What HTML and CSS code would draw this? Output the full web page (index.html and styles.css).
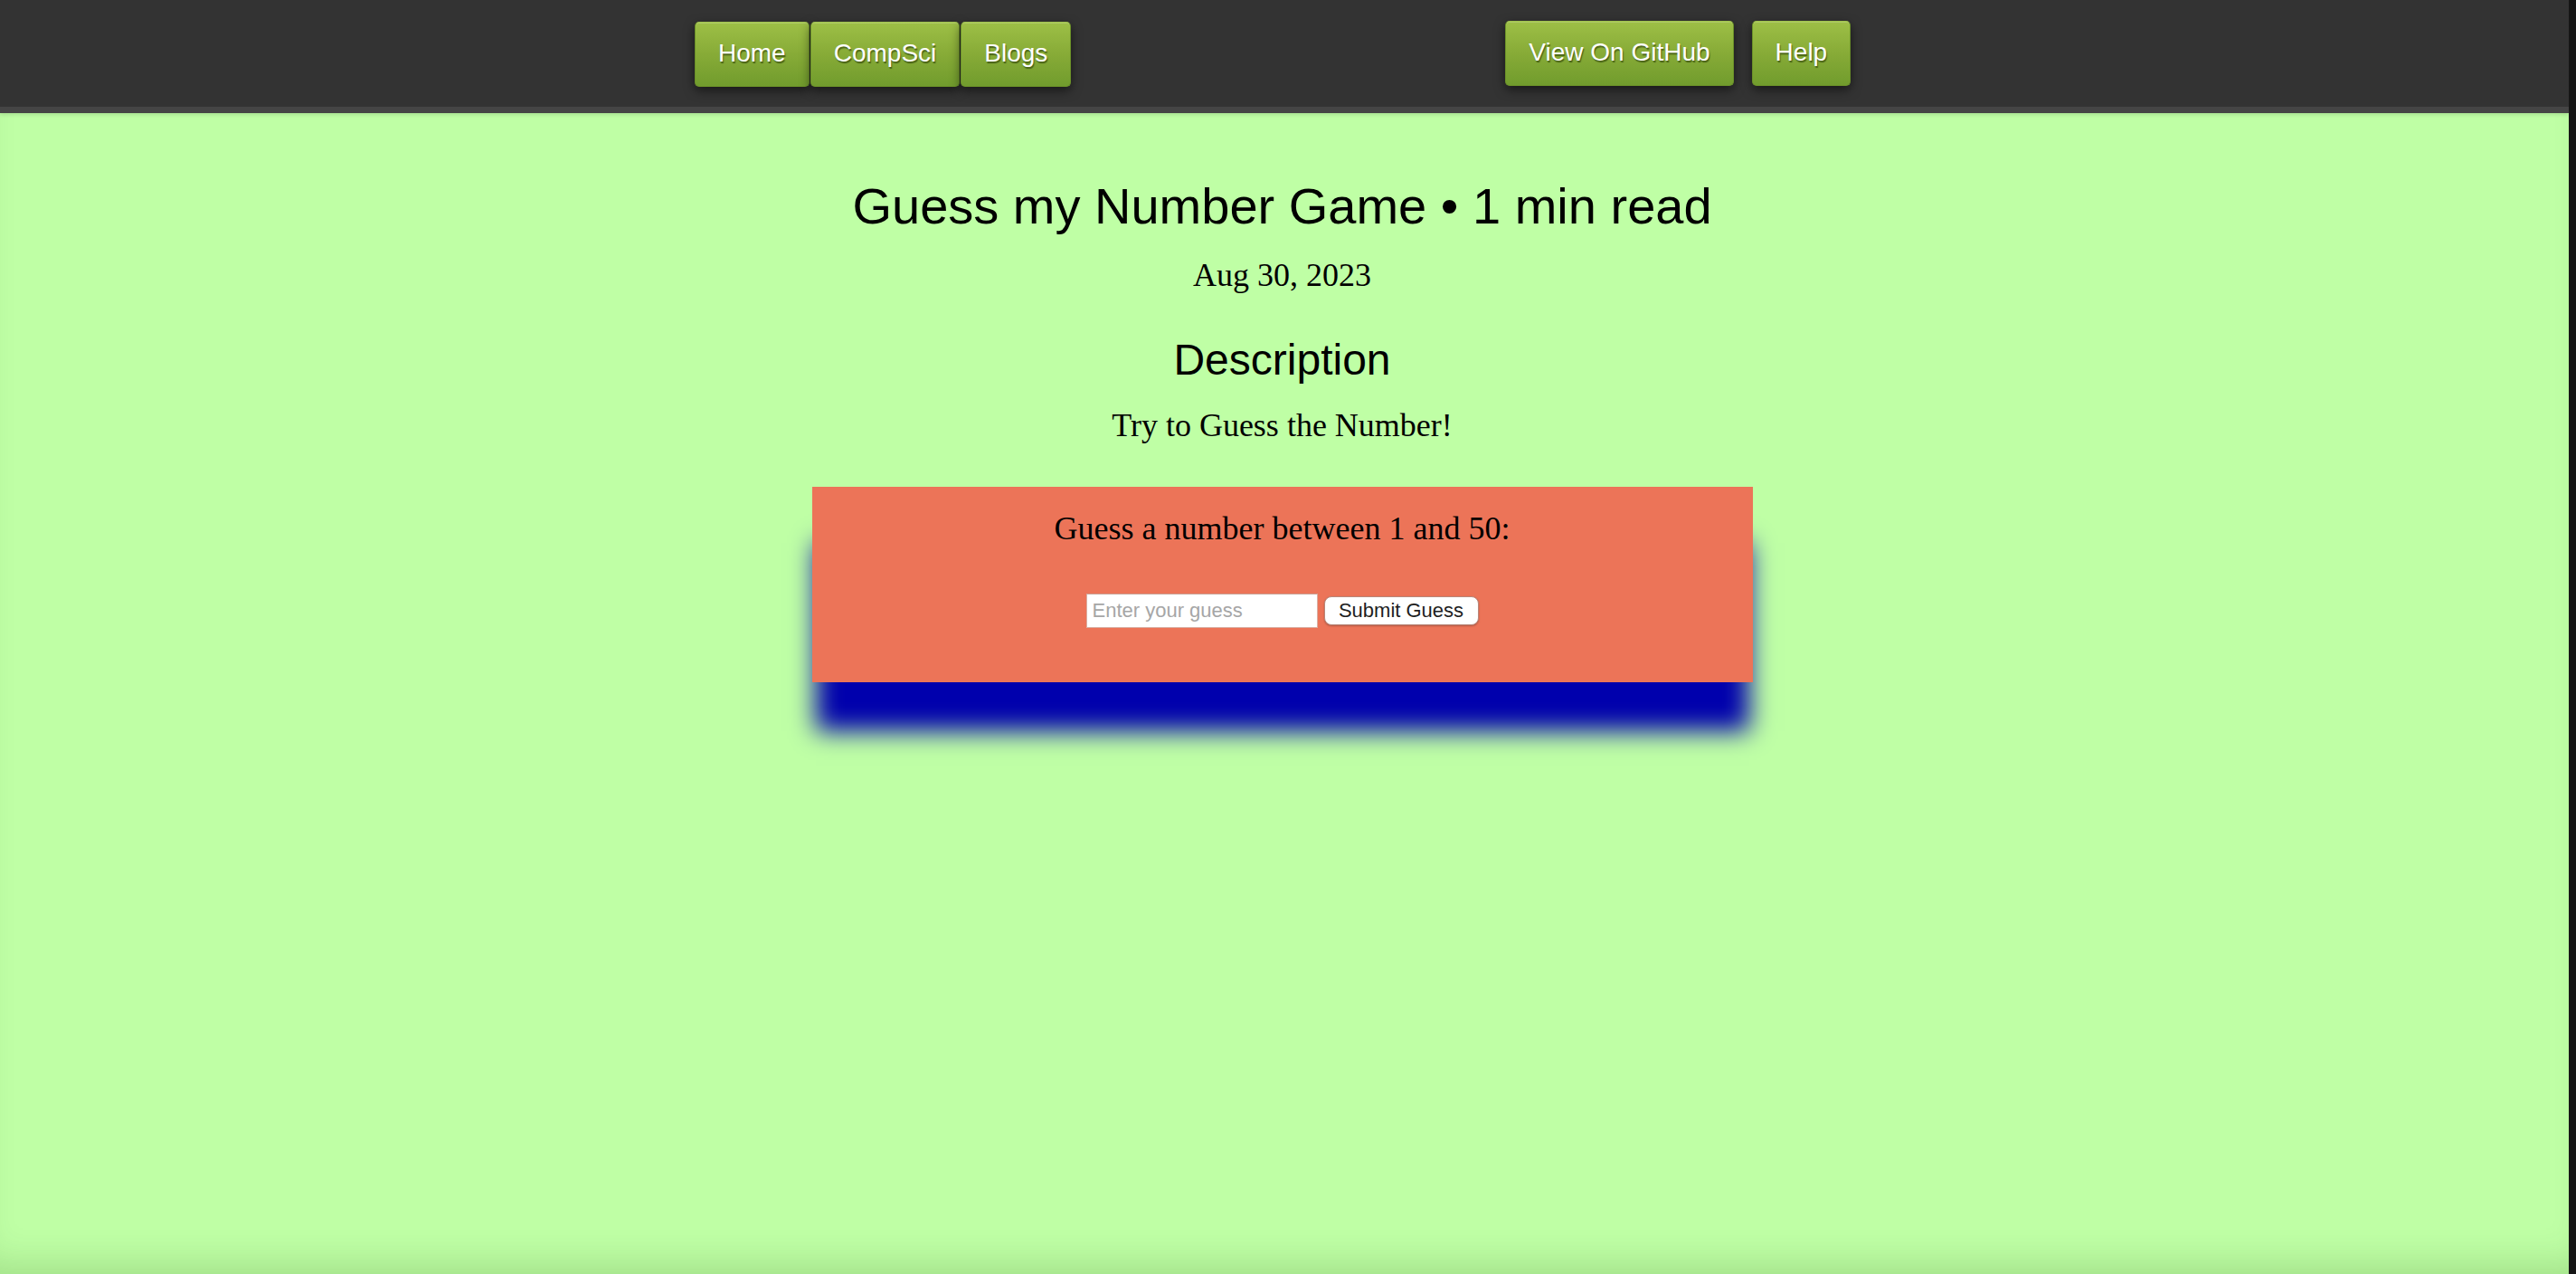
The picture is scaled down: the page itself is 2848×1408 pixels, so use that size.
FILE: index.html
```html
<!DOCTYPE html>
<html lang="en">
<head>
<meta charset="utf-8">
<title>Guess my Number Game</title>
<link rel="stylesheet" href="styles.css">
</head>
<body>
<header class="topbar">
  <nav class="nav">
    <div class="nav-group">
      <a class="nav-btn" href="#">Home</a>
      <a class="nav-btn" href="#">CompSci</a>
      <a class="nav-btn" href="#">Blogs</a>
    </div>
    <div class="nav-group nav-group-right">
      <a class="nav-btn" href="#">View On GitHub</a>
      <a class="nav-btn" href="#">Help</a>
    </div>
  </nav>
</header>
<main class="post">
  <h1 class="post-title">Guess my Number Game • 1 min read</h1>
  <p class="post-date">Aug 30, 2023</p>
  <h2 class="post-heading">Description</h2>
  <p class="post-lead">Try to Guess the Number!</p>
  <section class="game">
    <p class="game-prompt">Guess a number between 1 and 50:</p>
    <div class="game-form">
      <input class="game-input" type="text" placeholder="Enter your guess">
      <button class="game-submit" type="button">Submit Guess</button>
    </div>
  </section>
</main>
</body>
</html>
```
FILE: styles.css
```css
html {
  background: #161616;
}
body {
  margin: 0 8px 0 0;
  min-height: 1408px;
  background: #bfffa5;
  box-shadow: inset 0 -34px 40px -24px rgba(20, 70, 0, 0.18);
  font-family: "Liberation Serif", "Times New Roman", serif;
  color: #000;
}
.topbar {
  height: 118px;
  background: #333333;
  border-bottom: 7px solid #454545;
  box-shadow: 0 2px 4px rgba(0, 0, 0, 0.12);
}
.nav {
  display: flex;
  align-items: flex-start;
  padding-left: 768px;
  padding-top: 24px;
}
.nav-group {
  display: flex;
  gap: 1px;
}
.nav-group-right {
  margin-left: 480px;
  margin-top: -1px;
  gap: 20px;
}
.nav-btn {
  display: flex;
  align-items: center;
  box-sizing: border-box;
  height: 72px;
  padding: 0 25px 2px;
  border: 1px solid #6b9128;
  border-top-color: #9fc24a;
  border-radius: 5px;
  background: linear-gradient(#9dbf46, #87ab37 50%, #719c2d);
  box-shadow: 0 4px 12px rgba(0, 0, 0, 0.55), inset 0 1px 0 rgba(255, 255, 255, 0.18);
  color: #fff;
  text-decoration: none;
  font-family: "Liberation Sans", Arial, sans-serif;
  font-size: 28px;
  text-shadow: 1px 2px 1px rgba(50, 70, 10, 0.7);
}
.post {
  display: flex;
  flex-direction: column;
  align-items: center;
  padding-top: 71px;
  padding-right: 5px;
}
.post-title {
  margin: 0;
  font-family: "Liberation Sans", Arial, sans-serif;
  font-weight: normal;
  font-size: 56px;
  line-height: 64px;
}
.post-date {
  margin: 24px 0 0;
  font-size: 36px;
  line-height: 40px;
}
.post-heading {
  margin: 47px 0 0;
  font-family: "Liberation Sans", Arial, sans-serif;
  font-weight: normal;
  font-size: 48px;
  line-height: 54px;
}
.post-lead {
  margin: 25px 0 0;
  font-size: 36px;
  line-height: 40px;
}
.game {
  box-sizing: border-box;
  width: 1040px;
  height: 216px;
  margin-top: 48px;
  padding-top: 26px;
  background: #ec7458;
  box-shadow: 0 58px 26px -4px #0000ad;
  display: flex;
  flex-direction: column;
  align-items: center;
}
.game-prompt {
  margin: 0;
  font-size: 36px;
  line-height: 40px;
}
.game-form {
  display: flex;
  align-items: center;
  gap: 7px;
  margin-top: 52px;
}
.game-input {
  box-sizing: border-box;
  width: 256px;
  height: 38px;
  margin: 0;
  padding: 0 6px;
  border: 1px solid #d9b0a4;
  border-top-color: #c9a093;
  background: #fff;
  font-family: "Liberation Sans", Arial, sans-serif;
  font-size: 22px;
  outline: none;
}
.game-input::placeholder {
  color: #a6a6a6;
}
.game-submit {
  box-sizing: border-box;
  width: 171px;
  height: 32px;
  margin: 0;
  padding: 0;
  border: 1px solid #b8877a;
  border-radius: 8px;
  background: #fff;
  color: #1e1e1e;
  font-family: "Liberation Sans", Arial, sans-serif;
  font-size: 22px;
  box-shadow: 0 1px 2px rgba(0, 0, 0, 0.25);
}
```
